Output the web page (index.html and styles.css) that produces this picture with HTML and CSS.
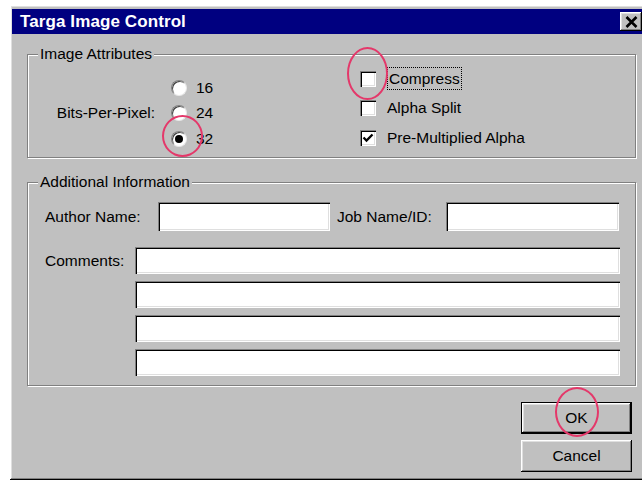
FILE: index.html
```html
<!DOCTYPE html>
<html lang="en">
<head>
<meta charset="utf-8">
<title>Targa Image Control</title>
<link rel="stylesheet" href="styles.css">
</head>
<body>
<div class="window">
  <div class="titlebar">
    <span class="title">Targa Image Control</span>
    <span class="close" aria-label="Close">
      <svg width="13" height="12" viewBox="0 0 13 12"><path d="M1.5 1 L11.5 11 M11.5 1 L1.5 11" stroke="#000" stroke-width="2.6" fill="none"/></svg>
    </span>
  </div>

  <div class="body">
    <div class="group attrs">
      <span class="legend">Image Attributes</span>
      <div class="bpp">
        <span class="bpp-label">Bits-Per-Pixel:</span>
        <div class="radios">
          <div class="opt"><span class="radio"></span>16</div>
          <div class="opt"><span class="radio"></span>24</div>
          <div class="opt"><span class="radio on"></span>32</div>
        </div>
      </div>
      <div class="checks">
        <div class="opt"><span class="check"></span><span class="focus">Compress</span></div>
        <div class="opt"><span class="check"></span>Alpha Split</div>
        <div class="opt"><span class="check">
          <svg width="12" height="12" viewBox="0 0 12 12"><path d="M1.5 5.5 L4.5 8.5 L10.5 2.5" stroke="#000" stroke-width="2.3" fill="none"/></svg>
        </span>Pre-Multiplied Alpha</div>
      </div>
    </div>

    <div class="group info">
      <span class="legend">Additional Information</span>
      <div class="names">
        <span class="lbl author-lbl">Author Name:</span>
        <span class="field author"></span>
        <span class="lbl job-lbl">Job Name/ID:</span>
        <span class="field job"></span>
      </div>
      <div class="comments">
        <span class="lbl comments-lbl">Comments:</span>
        <span class="field line"></span>
        <span class="field line"></span>
        <span class="field line"></span>
        <span class="field line"></span>
      </div>
    </div>

    <div class="buttons">
      <span class="btn default">OK</span>
      <span class="btn">Cancel</span>
    </div>
  </div>

  <span class="mark mark-radio"></span>
  <span class="mark mark-check"></span>
  <span class="mark mark-ok"></span>
</div>
</body>
</html>
```

FILE: styles.css
```css
html, body {
  margin: 0;
  padding: 0;
  background: #ffffff;
  overflow: hidden;
}

body {
  font-family: "Liberation Sans", Arial, sans-serif;
  font-size: 15.5px;
  color: #000;
}

/* dialog frame */
.window {
  position: relative;
  box-sizing: border-box;
  margin: 5px 0 0 10px;
  width: 640px;
  height: 475px;
  padding: 4px 2px 2px 2px;
  background: #c0c0c0;
  box-shadow:
    inset -1px -1px 0 #000,
    inset 1px 1px 0 #fff,
    inset -2px -2px 0 #808080,
    inset 2px 2px 0 #dfdfdf;
}

.titlebar {
  height: 25px;
  background: #000080;
  display: flex;
  align-items: center;
  padding-left: 8px;
}

.title {
  flex: 1;
  color: #fff;
  font-weight: bold;
  font-size: 17px;
  letter-spacing: 0.1px;
}

.close {
  flex: none;
  width: 22px;
  height: 19px;
  margin-right: 6px;
  background: #c0c0c0;
  display: flex;
  align-items: center;
  justify-content: center;
  box-shadow:
    inset -1px -1px 0 #000,
    inset 1px 1px 0 #fff,
    inset -2px -2px 0 #808080,
    inset 2px 2px 0 #dfdfdf;
}

.body {
  padding: 20px 0 0 15px;
}

/* group boxes */
.group {
  position: relative;
  box-sizing: border-box;
  width: 609px;
  border: 1px solid #808080;
  box-shadow: 1px 1px 0 #fff, inset 1px 1px 0 #fff;
}

.legend {
  position: absolute;
  top: -10px;
  left: 10px;
  padding: 0 2px;
  line-height: 18px;
  background: #c0c0c0;
}

.attrs {
  height: 104px;
  display: grid;
  grid-template-columns: 299px 1fr;
  padding-left: 33px;
}

.bpp {
  display: grid;
  grid-template-columns: 94px auto;
  column-gap: 16px;
  padding-top: 14px;
  align-items: center;
}

.bpp-label {
  justify-self: end;
  white-space: nowrap;
}

.radios .opt {
  height: 25.5px;
}

.opt {
  display: flex;
  align-items: center;
  white-space: nowrap;
}

.radio {
  position: relative;
  box-sizing: border-box;
  width: 16px;
  height: 16px;
  margin-right: 9px;
  border-radius: 50%;
  background: #fff;
  border: 1px solid;
  border-color: #808080 #e8e8e8 #e8e8e8 #808080;
  box-shadow: inset 1px 1px 0 #404040;
}

.radio.on::after {
  content: "";
  position: absolute;
  left: 3px;
  top: 3px;
  width: 8px;
  height: 8px;
  border-radius: 50%;
  background: #000;
}

.checks {
  padding-top: 9px;
}

.checks .opt {
  height: 29.5px;
}

.check {
  box-sizing: border-box;
  width: 16px;
  height: 16px;
  margin-right: 11px;
  background: #fff;
  display: flex;
  align-items: center;
  justify-content: center;
  box-shadow:
    inset 1px 1px 0 #808080,
    inset 2px 2px 0 #000,
    inset -1px -1px 0 #fff,
    inset -2px -2px 0 #dfdfdf;
}

.focus {
  border: 1px dotted #000;
  padding: 0 1px;
  line-height: 21px;
}

/* additional information */
.info {
  height: 204px;
  margin-top: 24px;
  padding: 19px 0 0 17px;
}

.names {
  display: flex;
  align-items: center;
  height: 29px;
}

.lbl {
  white-space: nowrap;
}

.author-lbl {
  width: 113px;
}

.job-lbl {
  width: 109px;
  margin-left: 7px;
}

.field {
  box-sizing: border-box;
  display: block;
  background: #fff;
  box-shadow:
    inset 1px 1px 0 #808080,
    inset 2px 2px 0 #000,
    inset -1px -1px 0 #fff,
    inset -2px -2px 0 #dfdfdf;
}

.author {
  width: 172px;
  height: 29px;
}

.job {
  width: 173px;
  height: 29px;
}

.comments {
  display: grid;
  grid-template-columns: 90px 485px;
  grid-auto-rows: 27px;
  row-gap: 7px;
  margin-top: 16px;
}

.comments-lbl {
  grid-row: 1;
  grid-column: 1;
  align-self: center;
}

.comments .line {
  grid-column: 2;
}

/* command buttons */
.buttons {
  display: flex;
  flex-direction: column;
  align-items: flex-end;
  gap: 6px;
  margin-top: 16px;
  padding-right: 16px;
}

.btn {
  box-sizing: border-box;
  width: 111px;
  height: 32px;
  display: flex;
  align-items: center;
  justify-content: center;
  background: #c0c0c0;
  box-shadow:
    inset -1px -1px 0 #000,
    inset 1px 1px 0 #fff,
    inset -2px -2px 0 #808080,
    inset 2px 2px 0 #dfdfdf;
}

.btn.default {
  border: 1px solid #000;
}

/* red highlight rings drawn over the dialog */
.mark {
  position: absolute;
  box-sizing: border-box;
  border: 2px solid #e4386a;
  border-radius: 50%;
}

.mark-radio {
  left: 152px;
  top: 110px;
  width: 41px;
  height: 42px;
}

.mark-check {
  left: 337px;
  top: 42px;
  width: 41px;
  height: 53px;
}

.mark-ok {
  left: 545px;
  top: 382px;
  width: 44px;
  height: 50px;
}
```
